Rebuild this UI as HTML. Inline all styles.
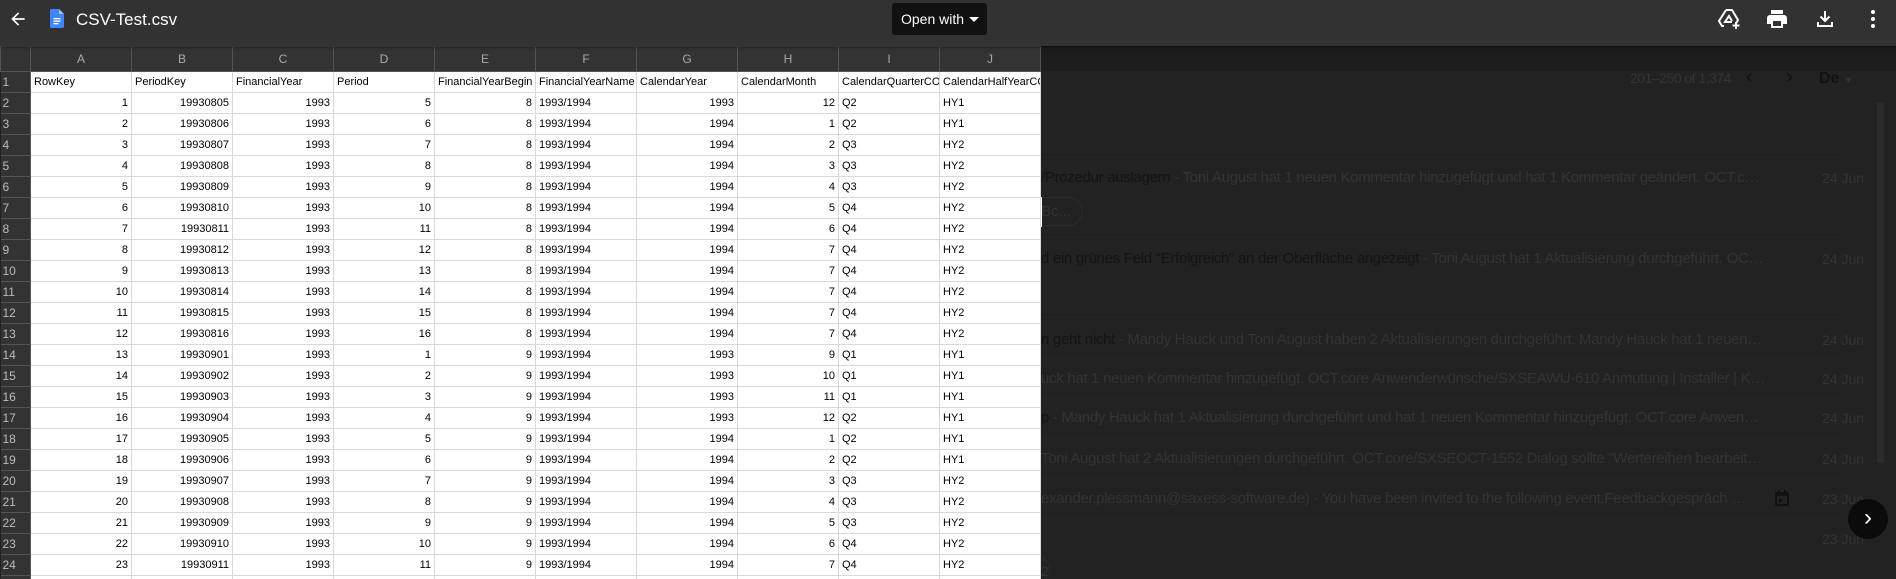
<!DOCTYPE html>
<html style="height:579px;overflow:hidden"><head><meta charset="utf-8"><style>
*{margin:0;padding:0;box-sizing:border-box}
body{width:1896px;height:579px;overflow:hidden;background:#222;font-family:"Liberation Sans",Arial,sans-serif;position:relative}
.bar{position:absolute;left:0;top:0;width:1896px;height:46px;background:#323232;box-shadow:0 1px 3px rgba(0,0,0,.6);z-index:5}
.t{position:absolute;white-space:nowrap}
table{position:absolute;left:0;top:46px;border-collapse:collapse;table-layout:fixed;width:1041px;font-size:11px;color:#000}
td{height:21px;border:1px solid #d9d9d9;background:#fff;padding:0 3px;overflow:hidden;white-space:nowrap;width:101px}
td.n{text-align:right}
tr.h td{height:25px;background:#333;color:#aaa;border:1px solid #555;text-align:center;font-size:12px}
td.r{width:30px;background:#333;color:#bbb;border:1px solid #555;border-left:none;font-size:12px;padding-left:2px}
.m{position:absolute;left:1041px;font-size:15px;color:#333;white-space:nowrap;width:725px;overflow:hidden;text-overflow:ellipsis;letter-spacing:-0.3px}
.m b{font-weight:normal;color:#141414}
.d{position:absolute;left:1822px;font-size:14px;color:#333}
.ln{position:absolute;left:1041px;width:800px;height:1px;background:#262626}
</style></head><body>
<div class="bar">
<svg class="t" style="left:8px;top:9px" width="20" height="20" viewBox="0 0 24 24"><path d="M20 11H7.8l5.6-5.6L12 4l-8 8 8 8 1.4-1.4L7.8 13H20z" fill="#fff"/></svg>
<svg class="t" style="left:50px;top:9px" width="14" height="19" viewBox="0 0 14 19"><path d="M1.5 0H9l5 5v12.5a1.5 1.5 0 0 1-1.5 1.5h-11A1.5 1.5 0 0 1 0 17.5v-16A1.5 1.5 0 0 1 1.5 0z" fill="#4285f4"/><path d="M9 0v5h5z" fill="#a1c2fa"/><rect x="3.5" y="9" width="7" height="1.3" fill="#fff"/><rect x="3.5" y="11.5" width="7" height="1.3" fill="#fff"/><rect x="3.5" y="14" width="5" height="1.3" fill="#fff"/></svg>
<div class="t" style="left:76px;top:10px;font-size:17px;color:#fff">CSV-Test.csv</div>
<div class="t" style="left:892px;top:3px;width:95px;height:32px;background:#111;border-radius:3px;color:#fff;font-size:14px;line-height:32px;padding-left:9px">Open with<span style="position:absolute;right:8px;top:14px;border:5px solid transparent;border-top-color:#fff"></span></div>
<svg class="t" style="left:1717px;top:7px" width="24" height="24" viewBox="0 0 24 24" fill="none" stroke="#fff" stroke-width="2"><path d="M9 3h6l6 10-2 3.5M7 19H5l-3-5L9 3M15 14l-3-5-4 6h7"/><path d="M19 15v7M15.5 18.5h7"/></svg>
<svg class="t" style="left:1765px;top:7px" width="24" height="24" viewBox="0 0 24 24"><path d="M19 8H5a3 3 0 0 0-3 3v6h4v4h12v-4h4v-6a3 3 0 0 0-3-3zm-3 11H8v-5h8zM18 3H6v4h12z" fill="#fff"/></svg>
<svg class="t" style="left:1813px;top:7px" width="24" height="24" viewBox="0 0 24 24"><path d="M12 4v10M7.5 9.5 12 14l4.5-4.5M5 15v4h14v-4" fill="none" stroke="#fff" stroke-width="2"/></svg>
<svg class="t" style="left:1861px;top:7px" width="24" height="24" viewBox="0 0 24 24" fill="#fff"><circle cx="12" cy="5" r="2"/><circle cx="12" cy="12" r="2"/><circle cx="12" cy="19" r="2"/></svg>
</div>
<div class="t" style="left:1041px;top:46px;width:855px;height:25px;background:#1d1d1d"></div>
<div class="t" style="left:1630px;top:70px;font-size:14px;color:#333;letter-spacing:-0.5px">201–250 of 1,374</div>
<div class="t" style="left:1746px;top:66px;font-size:20px;color:#111">‹</div>
<div class="t" style="left:1786px;top:66px;font-size:20px;color:#111">›</div>
<div class="t" style="left:1819px;top:70px;font-size:16px;color:#111;font-weight:bold">De <span style="font-size:9px;color:#333">▼</span></div>
<div class="t" style="left:1877px;top:103px;width:7px;height:360px;background:#2b2b2b"></div>
<div class="ln" style="top:157px"></div>
<div class="m" style="top:169px"><b>/Prozedur auslagern</b> - Toni August hat 1 neuen Kommentar hinzugefügt und hat 1 Kommentar geändert. OCT.core/SXSE</div><div class="d" style="top:170px">24 Jun</div>
<div class="t" style="left:1020px;top:197px;width:63px;height:29px;border:1px solid #2c2c2c;border-radius:15px;color:#333;font-size:15px;padding:5px 0 0 20px">Bc...</div>
<div class="t" style="left:1041px;top:197px;width:1px;height:30px;background:#fff"></div>
<div class="ln" style="top:237px"></div>
<div class="m" style="top:250px"><b>d ein grünes Feld "Erfolgreich" an der Oberfläche angezeigt</b> - Toni August hat 1 Aktualisierung durchgeführt. OCT.core</div><div class="d" style="top:251px">24 Jun</div>
<div class="ln" style="top:317px"></div>
<div class="m" style="top:331px"><b>n geht nicht</b> - Mandy Hauck und Toni August haben 2 Aktualisierungen durchgeführt. Mandy Hauck hat 1 neuen Kommentar</div><div class="d" style="top:332px">24 Jun</div>
<div class="ln" style="top:358px"></div>
<div class="m" style="top:370px">uck hat 1 neuen Kommentar hinzugefügt. OCT.core Anwenderwünsche/SXSEAWU-610 Anmutung | Installer | Komponenten</div><div class="d" style="top:371px">24 Jun</div>
<div class="ln" style="top:398px"></div>
<div class="m" style="top:409px"><b>p</b> - Mandy Hauck hat 1 Aktualisierung durchgeführt und hat 1 neuen Kommentar hinzugefügt. OCT.core Anwenderwünsche</div><div class="d" style="top:410px">24 Jun</div>
<div class="ln" style="top:438px"></div>
<div class="m" style="top:450px">Toni August hat 2 Aktualisierungen durchgeführt. OCT.core/SXSEOCT-1552 Dialog sollte "Wertereihen bearbeiten" heißen</div><div class="d" style="top:451px">24 Jun</div>
<div class="ln" style="top:478px"></div>
<div class="m" style="top:490px;width:715px">exander.plessmann@saxess-software.de) - You have been invited to the following event.Feedbackgespräch Wehner</div><div class="d" style="top:491px">23 Jun</div>
<svg class="t" style="left:1775px;top:490px" width="14" height="16" viewBox="0 0 14 16"><rect x="1" y="3" width="12" height="12" rx="1" fill="none" stroke="#111" stroke-width="2"/><rect x="1" y="3" width="12" height="3" fill="#111"/><rect x="3" y="0" width="2" height="4" fill="#111"/><rect x="9" y="0" width="2" height="4" fill="#111"/><rect x="4" y="9" width="3" height="3" fill="#111"/></svg>
<div class="ln" style="top:518px"></div>
<div class="d" style="top:531px">23 Jun</div>
<div class="t" style="left:1020px;top:556px;width:30px;height:28px;border:1px solid #2c2c2c;border-radius:15px;color:#333;font-size:14px;padding:6px 0 0 20px">2</div>
<div class="t" style="left:1848px;top:499px;width:40px;height:40px;border-radius:50%;background:#0b0b0b;color:#fff;font-size:24px;line-height:38px;text-align:center">›</div>
<table>
<tr class="h"><td class="r" style="background:#333"></td><td>A</td><td>B</td><td>C</td><td>D</td><td>E</td><td>F</td><td>G</td><td>H</td><td>I</td><td>J</td></tr>
<tr><td class="r">1</td><td>RowKey</td><td>PeriodKey</td><td>FinancialYear</td><td>Period</td><td>FinancialYearBegin</td><td>FinancialYearName</td><td>CalendarYear</td><td>CalendarMonth</td><td>CalendarQuarterCODE</td><td>CalendarHalfYearCODE</td></tr>
<tr><td class="r">2</td><td class="n">1</td><td class="n">19930805</td><td class="n">1993</td><td class="n">5</td><td class="n">8</td><td>1993/1994</td><td class="n">1993</td><td class="n">12</td><td>Q2</td><td>HY1</td></tr>
<tr><td class="r">3</td><td class="n">2</td><td class="n">19930806</td><td class="n">1993</td><td class="n">6</td><td class="n">8</td><td>1993/1994</td><td class="n">1994</td><td class="n">1</td><td>Q2</td><td>HY1</td></tr>
<tr><td class="r">4</td><td class="n">3</td><td class="n">19930807</td><td class="n">1993</td><td class="n">7</td><td class="n">8</td><td>1993/1994</td><td class="n">1994</td><td class="n">2</td><td>Q3</td><td>HY2</td></tr>
<tr><td class="r">5</td><td class="n">4</td><td class="n">19930808</td><td class="n">1993</td><td class="n">8</td><td class="n">8</td><td>1993/1994</td><td class="n">1994</td><td class="n">3</td><td>Q3</td><td>HY2</td></tr>
<tr><td class="r">6</td><td class="n">5</td><td class="n">19930809</td><td class="n">1993</td><td class="n">9</td><td class="n">8</td><td>1993/1994</td><td class="n">1994</td><td class="n">4</td><td>Q3</td><td>HY2</td></tr>
<tr><td class="r">7</td><td class="n">6</td><td class="n">19930810</td><td class="n">1993</td><td class="n">10</td><td class="n">8</td><td>1993/1994</td><td class="n">1994</td><td class="n">5</td><td>Q4</td><td>HY2</td></tr>
<tr><td class="r">8</td><td class="n">7</td><td class="n">19930811</td><td class="n">1993</td><td class="n">11</td><td class="n">8</td><td>1993/1994</td><td class="n">1994</td><td class="n">6</td><td>Q4</td><td>HY2</td></tr>
<tr><td class="r">9</td><td class="n">8</td><td class="n">19930812</td><td class="n">1993</td><td class="n">12</td><td class="n">8</td><td>1993/1994</td><td class="n">1994</td><td class="n">7</td><td>Q4</td><td>HY2</td></tr>
<tr><td class="r">10</td><td class="n">9</td><td class="n">19930813</td><td class="n">1993</td><td class="n">13</td><td class="n">8</td><td>1993/1994</td><td class="n">1994</td><td class="n">7</td><td>Q4</td><td>HY2</td></tr>
<tr><td class="r">11</td><td class="n">10</td><td class="n">19930814</td><td class="n">1993</td><td class="n">14</td><td class="n">8</td><td>1993/1994</td><td class="n">1994</td><td class="n">7</td><td>Q4</td><td>HY2</td></tr>
<tr><td class="r">12</td><td class="n">11</td><td class="n">19930815</td><td class="n">1993</td><td class="n">15</td><td class="n">8</td><td>1993/1994</td><td class="n">1994</td><td class="n">7</td><td>Q4</td><td>HY2</td></tr>
<tr><td class="r">13</td><td class="n">12</td><td class="n">19930816</td><td class="n">1993</td><td class="n">16</td><td class="n">8</td><td>1993/1994</td><td class="n">1994</td><td class="n">7</td><td>Q4</td><td>HY2</td></tr>
<tr><td class="r">14</td><td class="n">13</td><td class="n">19930901</td><td class="n">1993</td><td class="n">1</td><td class="n">9</td><td>1993/1994</td><td class="n">1993</td><td class="n">9</td><td>Q1</td><td>HY1</td></tr>
<tr><td class="r">15</td><td class="n">14</td><td class="n">19930902</td><td class="n">1993</td><td class="n">2</td><td class="n">9</td><td>1993/1994</td><td class="n">1993</td><td class="n">10</td><td>Q1</td><td>HY1</td></tr>
<tr><td class="r">16</td><td class="n">15</td><td class="n">19930903</td><td class="n">1993</td><td class="n">3</td><td class="n">9</td><td>1993/1994</td><td class="n">1993</td><td class="n">11</td><td>Q1</td><td>HY1</td></tr>
<tr><td class="r">17</td><td class="n">16</td><td class="n">19930904</td><td class="n">1993</td><td class="n">4</td><td class="n">9</td><td>1993/1994</td><td class="n">1993</td><td class="n">12</td><td>Q2</td><td>HY1</td></tr>
<tr><td class="r">18</td><td class="n">17</td><td class="n">19930905</td><td class="n">1993</td><td class="n">5</td><td class="n">9</td><td>1993/1994</td><td class="n">1994</td><td class="n">1</td><td>Q2</td><td>HY1</td></tr>
<tr><td class="r">19</td><td class="n">18</td><td class="n">19930906</td><td class="n">1993</td><td class="n">6</td><td class="n">9</td><td>1993/1994</td><td class="n">1994</td><td class="n">2</td><td>Q2</td><td>HY1</td></tr>
<tr><td class="r">20</td><td class="n">19</td><td class="n">19930907</td><td class="n">1993</td><td class="n">7</td><td class="n">9</td><td>1993/1994</td><td class="n">1994</td><td class="n">3</td><td>Q3</td><td>HY2</td></tr>
<tr><td class="r">21</td><td class="n">20</td><td class="n">19930908</td><td class="n">1993</td><td class="n">8</td><td class="n">9</td><td>1993/1994</td><td class="n">1994</td><td class="n">4</td><td>Q3</td><td>HY2</td></tr>
<tr><td class="r">22</td><td class="n">21</td><td class="n">19930909</td><td class="n">1993</td><td class="n">9</td><td class="n">9</td><td>1993/1994</td><td class="n">1994</td><td class="n">5</td><td>Q3</td><td>HY2</td></tr>
<tr><td class="r">23</td><td class="n">22</td><td class="n">19930910</td><td class="n">1993</td><td class="n">10</td><td class="n">9</td><td>1993/1994</td><td class="n">1994</td><td class="n">6</td><td>Q4</td><td>HY2</td></tr>
<tr><td class="r">24</td><td class="n">23</td><td class="n">19930911</td><td class="n">1993</td><td class="n">11</td><td class="n">9</td><td>1993/1994</td><td class="n">1994</td><td class="n">7</td><td>Q4</td><td>HY2</td></tr>
<tr><td class="r">25</td><td class="n">24</td><td class="n">19930912</td><td class="n">1993</td><td class="n">12</td><td class="n">9</td><td>1993/1994</td><td class="n">1994</td><td class="n">7</td><td>Q4</td><td>HY2</td></tr>
</table>
</body></html>
